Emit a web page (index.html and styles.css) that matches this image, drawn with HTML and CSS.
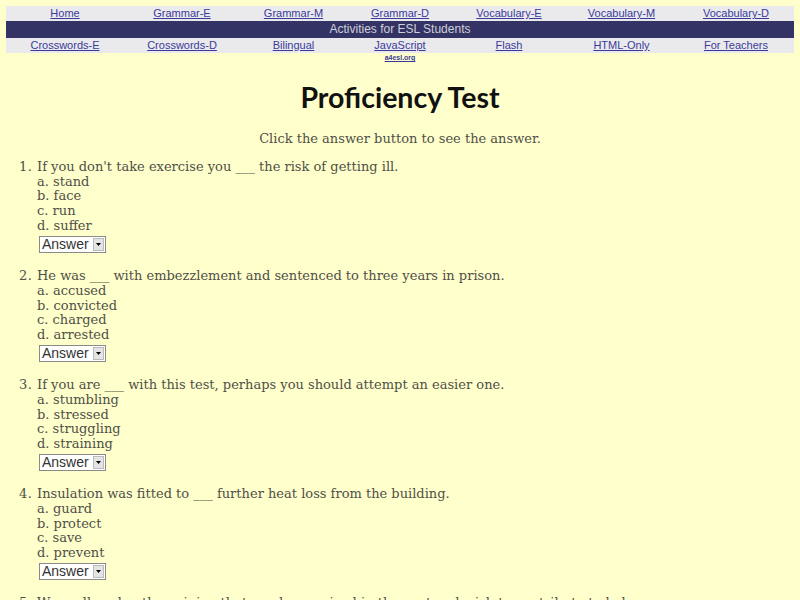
FILE: index.html
```html
<!DOCTYPE html>
<html>
<head>
<meta charset="utf-8">
<title>Proficiency Test</title>
<link rel="stylesheet" href="styles.css">
</head>
<body>
<nav class="nav">
  <div class="row light">
    <a href="#">Home</a>
    <a href="#">Grammar-E</a>
    <a href="#">Grammar-M</a>
    <a href="#">Grammar-D</a>
    <a href="#">Vocabulary-E</a>
    <a href="#">Vocabulary-M</a>
    <a href="#">Vocabulary-D</a>
  </div>
  <div class="row dark">Activities for ESL Students</div>
  <div class="row light">
    <a href="#">Crosswords-E</a>
    <a href="#">Crosswords-D</a>
    <a href="#">Bilingual</a>
    <a href="#">JavaScript</a>
    <a href="#">Flash</a>
    <a href="#">HTML-Only</a>
    <a href="#">For Teachers</a>
  </div>
  <div class="site"><a href="#">a4esl.org</a></div>
</nav>

<h1 class="title">Proficiency Test</h1>
<p class="intro">Click the answer button to see the answer.</p>

<ol class="quiz">
  <li>
    <div>If you don't take exercise you ___ the risk of getting ill.</div>
    <div>a. stand</div>
    <div>b. face</div>
    <div>c. run</div>
    <div>d. suffer</div>
    <span class="answer"><span class="label">Answer</span><span class="arrow"><svg width="5" height="3" viewBox="0 0 5 3"><path d="M0 0H5L2.5 3Z" fill="#000"/></svg></span></span>
  </li>
  <li>
    <div>He was ___ with embezzlement and sentenced to three years in prison.</div>
    <div>a. accused</div>
    <div>b. convicted</div>
    <div>c. charged</div>
    <div>d. arrested</div>
    <span class="answer"><span class="label">Answer</span><span class="arrow"><svg width="5" height="3" viewBox="0 0 5 3"><path d="M0 0H5L2.5 3Z" fill="#000"/></svg></span></span>
  </li>
  <li>
    <div>If you are ___ with this test, perhaps you should attempt an easier one.</div>
    <div>a. stumbling</div>
    <div>b. stressed</div>
    <div>c. struggling</div>
    <div>d. straining</div>
    <span class="answer"><span class="label">Answer</span><span class="arrow"><svg width="5" height="3" viewBox="0 0 5 3"><path d="M0 0H5L2.5 3Z" fill="#000"/></svg></span></span>
  </li>
  <li>
    <div>Insulation was fitted to ___ further heat loss from the building.</div>
    <div>a. guard</div>
    <div>b. protect</div>
    <div>c. save</div>
    <div>d. prevent</div>
    <span class="answer"><span class="label">Answer</span><span class="arrow"><svg width="5" height="3" viewBox="0 0 5 3"><path d="M0 0H5L2.5 3Z" fill="#000"/></svg></span></span>
  </li>
  <li>
    <div>We really value the opinion that you have voiced in the past and wish to contribute to help you.</div>
    <div>a. offer</div>
  </li>
</ol>
</body>
</html>
```

FILE: styles.css
```css
html, body {
  margin: 0;
  padding: 0;
  background: #ffffcc;
}
body {
  padding: 6px 6px 0 6px;
  font-family: "DejaVu Serif", serif;
  color: #4f4f48;
}
.nav {
  font-family: "Liberation Sans", Arial, sans-serif;
  font-size: 11px;
}
.row {
  display: grid;
  grid-template-columns: 118fr 116fr 107fr 106fr 112fr 113fr 116fr;
  text-align: center;
}
.row.light {
  background: #eaeaec;
  height: 15px;
  line-height: 15px;
}
.row.dark {
  display: block;
  background: #333366;
  color: #d0d0d8;
  font-size: 12px;
  height: 17px;
  line-height: 17px;
}
.row a {
  color: #3a3a9a;
  text-decoration: underline;
}
.site {
  text-align: center;
  font-size: 7px;
  line-height: 9px;
  font-weight: bold;
}
.site a {
  color: #3a3a9a;
}
.title {
  font-family: "Lato", sans-serif;
  font-weight: bold;
  font-size: 28.5px;
  color: #111;
  text-align: center;
  margin: 17px 0 0 0;
  line-height: 36px;
}
.intro {
  text-align: center;
  font-size: 13px;
  margin: 16px 0 0 0;
  line-height: 15px;
}
.quiz {
  margin: 14px 0 0 0;
  padding-left: 31px;
  font-size: 13px;
  line-height: 14.7px;
}
.quiz li {
  margin-bottom: 16.6px;
}
.quiz li::marker {
  letter-spacing: 0.5px;
}
.answer {
  display: inline-flex;
  align-items: center;
  margin: 2px 0 0 2px;
  height: 17px;
  box-sizing: border-box;
  border: 1px solid #8a8a8a;
  background: #ffffff;
  font-family: "Liberation Sans", Arial, sans-serif;
  font-size: 14px;
  color: #333;
  padding: 0 1px 0 2px;
  vertical-align: top;
}
.label {
  line-height: 15px;
}
.arrow {
  display: inline-flex;
  align-items: center;
  justify-content: center;
  width: 11px;
  height: 13px;
  margin-left: 4px;
  background: #e4e4e4;
  border: 1px solid #bbb;
  box-sizing: border-box;
}
```
